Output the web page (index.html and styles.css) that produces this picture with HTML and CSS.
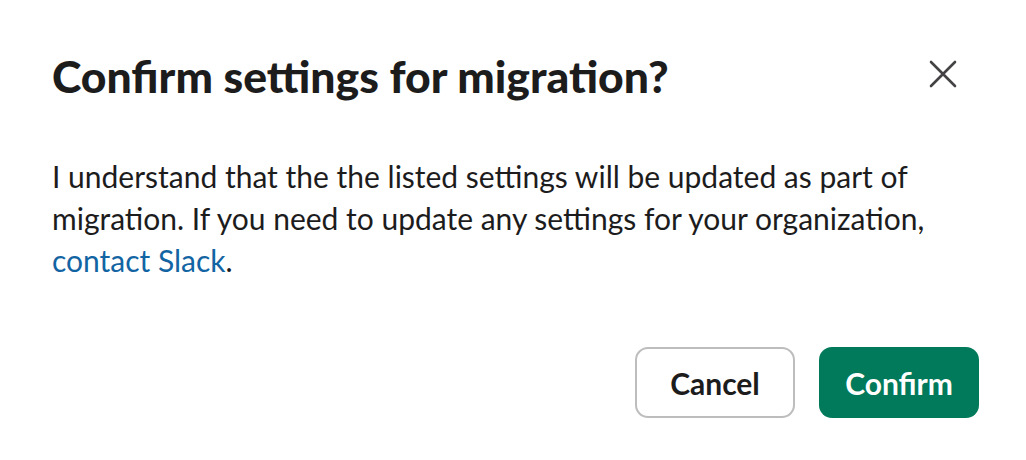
FILE: index.html
```html
<!DOCTYPE html>
<html>
<head>
<meta charset="utf-8">
<link rel="stylesheet" href="styles.css">
</head>
<body>
<div class="modal">
  <div class="header">
    <h1 class="title">Confirm settings for migration?</h1>
    <button class="close" aria-label="Close">
      <svg width="28" height="28" viewBox="0 0 28 28"><path d="M2 2L26 26M26 2L2 26" stroke="#454245" stroke-width="2.6" stroke-linecap="round" fill="none"/></svg>
    </button>
  </div>
  <p class="body">I understand that the the listed settings will be updated as part of migration. If you need to update any settings for your organization, <a class="link" href="#">contact Slack</a>.</p>
  <div class="footer">
    <button class="btn btn-secondary">Cancel</button>
    <button class="btn btn-primary">Confirm</button>
  </div>
</div>
</body>
</html>
```
FILE: styles.css
```css
html, body {
  margin: 0;
  padding: 0;
  background: #ffffff;
}
.modal {
  width: 1026px;
  height: 460px;
  box-sizing: border-box;
  padding: 50px 47px 0 52px;
  font-family: Lato, "Liberation Sans", sans-serif;
  color: #1d1c1d;
}
.header {
  display: flex;
  align-items: center;
  justify-content: space-between;
  height: 52px;
}
.title {
  margin: 0;
  font-size: 44.5px;
  font-weight: 900;
  line-height: 52px;
}
.close {
  border: none;
  background: none;
  padding: 0;
  margin-right: 22px;
  margin-top: -4px;
  display: flex;
}
.body {
  margin: 53px 0 0 0;
  font-size: 30px;
  line-height: 42px;
}
.link {
  color: #1264a3;
  text-decoration: none;
}
.footer {
  display: flex;
  justify-content: flex-end;
  gap: 24px;
  margin-top: 66px;
}
.btn {
  font-family: Lato, "Liberation Sans", sans-serif;
  font-size: 30px;
  font-weight: 700;
  height: 71px;
  width: 160px;
  border-radius: 13px;
  box-sizing: border-box;
  padding: 0;
}
.btn-secondary {
  background: #ffffff;
  color: #1d1c1d;
  border: 2px solid #bdbdbd;
}
.btn-primary {
  background: #007a5a;
  color: #ffffff;
  border: none;
}
```
